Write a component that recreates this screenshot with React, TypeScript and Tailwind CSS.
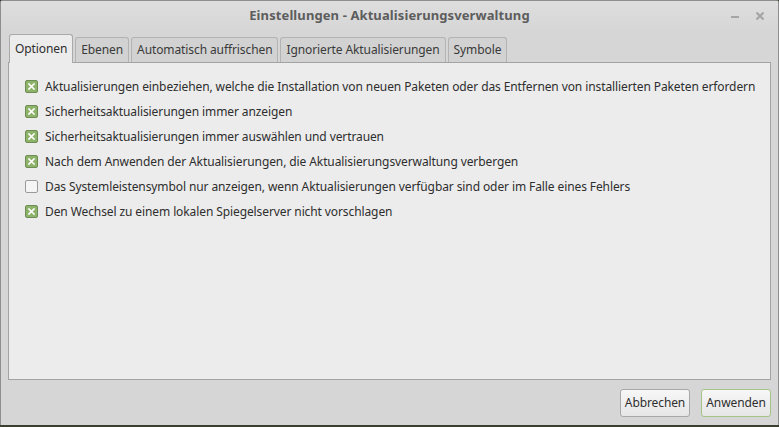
const options = [
  { label: 'Aktualisierungen einbeziehen, welche die Installation von neuen Paketen oder das Entfernen von installierten Paketen erfordern', checked: true },
  { label: 'Sicherheitsaktualisierungen immer anzeigen', checked: true },
  { label: 'Sicherheitsaktualisierungen immer auswählen und vertrauen', checked: true },
  { label: 'Nach dem Anwenden der Aktualisierungen, die Aktualisierungsverwaltung verbergen', checked: true },
  { label: 'Das Systemleistensymbol nur anzeigen, wenn Aktualisierungen verfügbar sind oder im Falle eines Fehlers', checked: false },
  { label: 'Den Wechsel zu einem lokalen Spiegelserver nicht vorschlagen', checked: true },
];

const tabs = ['Optionen', 'Ebenen', 'Automatisch auffrischen', 'Ignorierte Aktualisierungen', 'Symbole'];

function CheckBox({ checked }: { checked: boolean }) {
  if (!checked) {
    return <span className="w-[13px] h-[13px] shrink-0 rounded-[2px] border border-[#9a9a9a] bg-[#f5f5f5]" />;
  }
  return (
    <span className="w-[13px] h-[13px] shrink-0 rounded-[2px] border border-[#6f8c55] bg-[#8db36a] flex items-center justify-center">
      <svg width="7" height="7" viewBox="0 0 7 7">
        <path d="M1 1L6 6M6 1L1 6" stroke="#ffffff" strokeWidth="1.6" strokeLinecap="square" />
      </svg>
    </span>
  );
}

export default function App() {
  return (
    <div className="w-[779px] h-[427px] bg-[#3a4030] overflow-hidden font-['Noto_Sans',sans-serif] tracking-[-0.1px]">
      <div className="h-[425px] flex flex-col border border-b-0 border-[#8e8e8e] rounded-t-[3px] bg-[#d6d6d6]">
        {/* title bar */}
        <div className="relative h-[30px] flex items-center justify-center bg-gradient-to-b from-[#dedede] to-[#d6d6d6]">
          <span className="text-[13px] font-bold text-[#5d5d5d] tracking-[0.1px]">Einstellungen - Aktualisierungsverwaltung</span>
          <div className="absolute right-[13px] top-[10px] flex items-center gap-[15px] text-[#a5a5a5]">
            <svg width="10" height="10" viewBox="0 0 10 10">
              <path d="M1 6H9" stroke="currentColor" strokeWidth="2" />
            </svg>
            <svg width="10" height="10" viewBox="0 0 10 10">
              <path d="M1.5 1.5L8.5 8.5M8.5 1.5L1.5 8.5" stroke="currentColor" strokeWidth="2.2" />
            </svg>
          </div>
        </div>

        <div className="px-[7px] pt-[3px] flex flex-col">
          {/* tabs */}
          <div className="flex items-end gap-[2px] pl-[1px]">
            {tabs.map((t, i) =>
              i === 0 ? (
                <div
                  key={t}
                  className="relative z-10 -mb-px h-[29px] px-[5px] flex items-center rounded-t-[3px] border border-b-0 border-[#a9a9a9] bg-[#ececec] text-[12px] text-[#2e2e2e]"
                >
                  {t}
                </div>
              ) : (
                <div
                  key={t}
                  className="h-[25px] px-[5px] flex items-center rounded-t-[3px] border border-b-0 border-[#b3b3b3] bg-[#d2d2d2] text-[12px] text-[#3a3a3a]"
                >
                  {t}
                </div>
              )
            )}
          </div>

          {/* panel */}
          <div className="h-[318px] border border-[#a3a3a3] bg-[#ececec] pt-[11px] pl-[16px] flex flex-col">
            {options.map((o) => (
              <div key={o.label} className="h-[25px] flex items-center gap-[7px] text-[12px] text-[#2e2e2e]">
                <CheckBox checked={o.checked} />
                <span className="whitespace-nowrap">{o.label}</span>
              </div>
            ))}
          </div>
        </div>

        {/* buttons */}
        <div className="flex justify-end gap-[11px] px-[7px] pt-[9px]">
          <button className="h-[28px] w-[70px] rounded-[3px] border border-[#a8a8a8] bg-gradient-to-b from-[#f7f7f7] to-[#e6e6e6] text-[12px] text-[#2e2e2e]">
            Abbrechen
          </button>
          <button className="h-[28px] w-[70px] rounded-[3px] border border-[#a3c585] bg-gradient-to-b from-[#f7f7f7] to-[#e6e6e6] text-[12px] text-[#2e2e2e]">
            Anwenden
          </button>
        </div>
      </div>
    </div>
  );
}
